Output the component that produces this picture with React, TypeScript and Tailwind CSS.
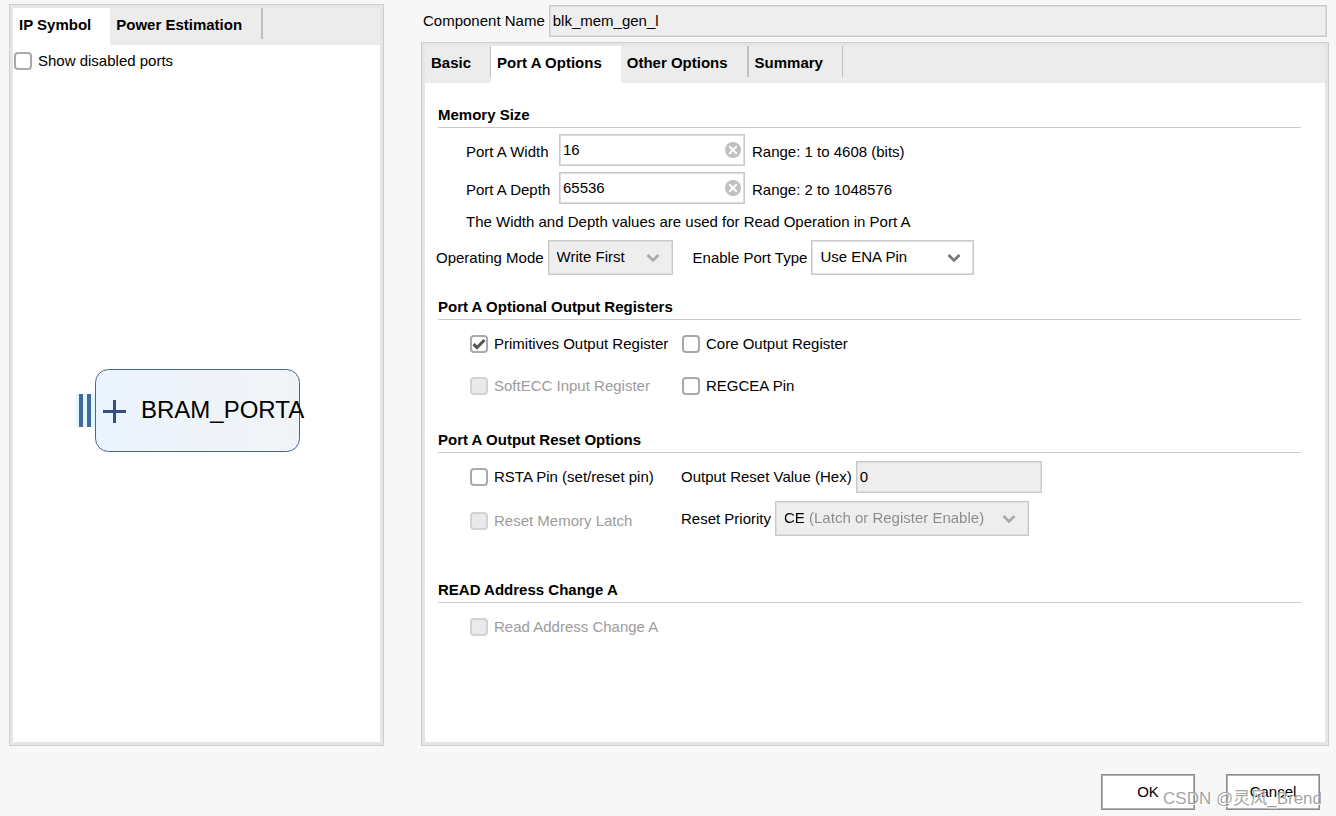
import React, { useState } from 'react';
import clsx from 'clsx';

interface Tab {
  name: string;
  divider?: string;
}

const symbolTabs: Tab[] = [
  { name: 'IP Symbol' },
  { name: 'Power Estimation', divider: 'w-0.5' }
];

const optionTabs: Tab[] = [
  { name: 'Basic', divider: 'w-px' },
  { name: 'Port A Options' },
  { name: 'Other Options', divider: 'w-0.5' },
  { name: 'Summary', divider: 'w-px' }
];

// Shared frame of text boxes and drop-downs
const fieldFrame = 'border border-[#c9c9c9] inset-ring inset-ring-[#dedede]';

interface TabBarProps {
  tabs: Tab[];
  active: string;
  onSelect: (name: string) => void;
}

function TabBar({ tabs, active, onSelect }: TabBarProps) {
  return (
    <div role="tablist" className="flex h-[37px] bg-[#ececec]">
      {tabs.map(tab => (
        <div key={tab.name} role="presentation" className="flex">
          <button
            role="tab"
            aria-selected={tab.name === active}
            onClick={() => onSelect(tab.name)}
            className={clsx(
              'pl-1.5 pr-[19px] pb-1 font-bold whitespace-nowrap',
              tab.name === active && 'bg-white'
            )}
          >
            {tab.name}
          </button>
          {tab.divider && <span className={clsx('h-[31px] bg-[#bfbfbf]', tab.divider)} />}
        </div>
      ))}
    </div>
  );
}

function Panel({ children, className }: { children: React.ReactNode; className?: string }) {
  return (
    <div className={clsx('flex flex-col border border-[#cdcdcd] bg-[#e6e6e6] p-[3px]', className)}>
      <div className="flex flex-1 flex-col bg-white">{children}</div>
    </div>
  );
}

interface CheckboxProps {
  label: string;
  defaultChecked?: boolean;
  disabled?: boolean;
}

function Checkbox({ label, defaultChecked, disabled }: CheckboxProps) {
  return (
    <label className={clsx('flex items-center gap-1.5 whitespace-nowrap', disabled && 'text-[#9c9c9c]')}>
      <span className="grid">
        <input
          type="checkbox"
          defaultChecked={defaultChecked}
          disabled={disabled}
          className="peer col-start-1 row-start-1 size-[18px] appearance-none rounded border-2 border-[#a9a9a9] bg-white disabled:border-[#d2d2d2] disabled:bg-[#e9eaec]"
        />
        <svg
          viewBox="0 0 18 18"
          className="pointer-events-none invisible col-start-1 row-start-1 size-[18px] peer-checked:visible"
        >
          <path d="M3.5 9.2 L7 12.6 L14.5 5" fill="none" stroke="#555" strokeWidth="3" />
        </svg>
      </span>
      {label}
    </label>
  );
}

function Section({ title, children }: { title: string; children: React.ReactNode }) {
  return (
    <section className="pt-[22px]">
      <h2 className="border-b border-[#cbcbcb] pb-0.5 font-bold">{title}</h2>
      {children}
    </section>
  );
}

interface NumberRowProps {
  id: string;
  label: string;
  initial: string;
  range: string;
}

function NumberRow({ id, label, initial, range }: NumberRowProps) {
  const [value, setValue] = useState(initial);

  return (
    <div className="flex items-center">
      <label htmlFor={id} className="w-[93px] pt-1">{label}</label>
      <div className={clsx('flex h-8 w-[186px] items-center bg-white px-[3px]', fieldFrame)}>
        <input
          id={id}
          value={value}
          onChange={e => setValue(e.target.value)}
          className="min-w-0 flex-1 outline-none"
        />
        <button aria-label={`Clear ${label}`} onClick={() => setValue('')}>
          <svg viewBox="0 0 16 16" className="size-4">
            <circle cx="8" cy="8" r="8" fill="#c0c0c0" />
            <path d="M4.3 4.3 L11.7 11.7 M11.7 4.3 L4.3 11.7" stroke="#fff" strokeWidth="2" />
          </svg>
        </button>
      </div>
      <span className="pl-[7px] pt-1">{range}</span>
    </div>
  );
}

interface SelectProps {
  id: string;
  label: string;
  options: string[];
  disabled?: boolean;
  className: string;
  textClass?: string;
}

function Select({ id, label, options, disabled, className, textClass = 'text-black' }: SelectProps) {
  return (
    <div className="flex items-center gap-1">
      <label htmlFor={id} className="whitespace-nowrap">{label}</label>
      <div className={clsx('grid h-[35px] items-center', fieldFrame, disabled ? 'bg-[#eee]' : 'bg-white', className)}>
        <select
          id={id}
          disabled={disabled}
          className={clsx('col-start-1 row-start-1 w-full appearance-none pb-0.5 pl-2 outline-none disabled:opacity-100', textClass)}
        >
          {options.map(option => (
            <option key={option}>{option}</option>
          ))}
        </select>
        <svg
          viewBox="0 0 14 10"
          className="pointer-events-none col-start-1 row-start-1 mr-3 h-2.5 w-3.5 justify-self-end"
        >
          <path d="M1.5 2 L7 7.4 L12.5 2" fill="none" stroke={disabled ? '#aaa' : '#777'} strokeWidth="2.8" />
        </svg>
      </div>
    </div>
  );
}

function PortSymbol() {
  return (
    <svg viewBox="0 0 243 84" className="h-[84px] w-[243px] overflow-visible">
      <defs>
        <linearGradient id="portFill">
          <stop offset="0" stopColor="#eaf4ff" />
          <stop offset="0.6" stopColor="#f0f4f9" />
          <stop offset="1" stopColor="#f1f4f7" />
        </linearGradient>
      </defs>
      <rect x="0" y="25" width="20" height="33" fill="#e2f4fc" />
      <rect x="3" y="25" width="4" height="33" fill="#3f6a98" />
      <rect x="11" y="25" width="4" height="33" fill="#3f6a98" />
      <rect x="19.5" y="0.5" width="204" height="82" rx="13" fill="url(#portFill)" stroke="#47658f" />
      <path d="M27 42.5 H50 M38.5 31 V54" stroke="#344f85" strokeWidth="3" />
      <text x="65" y="49" fontSize="24" fill="#000">BRAM_PORTA</text>
    </svg>
  );
}

export default function App() {
  const [symbolTab, setSymbolTab] = useState('IP Symbol');
  const [optionTab, setOptionTab] = useState('Port A Options');

  return (
    <div className="relative flex min-h-screen flex-col bg-[#f7f7f7] pt-1 font-['Liberation_Sans',Arial,sans-serif] text-[15px] leading-5 text-black">
      <main className="flex flex-1 gap-[37px] pl-[9px] pr-[7px]">
        <Panel className="w-[375px] shrink-0">
          <TabBar tabs={symbolTabs} active={symbolTab} onSelect={setSymbolTab} />
          <div className="py-1.5 pl-px">
            <Checkbox label="Show disabled ports" />
          </div>
          <div className="flex flex-1 items-center justify-center pl-0.5 pt-0.5">
            <PortSymbol />
          </div>
        </Panel>

        <div className="flex min-w-0 flex-1 flex-col gap-[5px] pt-px">
          <div className="flex items-center gap-1 pl-0.5 pr-0.5">
            <label htmlFor="componentName" className="whitespace-nowrap">Component Name</label>
            <input
              id="componentName"
              readOnly
              value="blk_mem_gen_l"
              className={clsx('h-8 min-w-0 flex-1 bg-[#eee] px-[3px] pb-0.5 outline-none', fieldFrame)}
            />
          </div>

          <Panel className="flex-1">
            <TabBar tabs={optionTabs} active={optionTab} onSelect={setOptionTab} />
            <div className="pl-[13px] pr-6">
              <Section title="Memory Size">
                <div className="flex flex-col gap-1.5 pl-7 pt-1.5">
                  <NumberRow id="widthA" label="Port A Width" initial="16" range="Range: 1 to 4608 (bits)" />
                  <NumberRow id="depthA" label="Port A Depth" initial="65536" range="Range: 2 to 1048576" />
                </div>
                <p className="py-2 pl-7">The Width and Depth values are used for Read Operation in Port A</p>
                <div className="-ml-0.5 flex gap-5">
                  <Select id="mode" label="Operating Mode" options={['Write First', 'Read First', 'No Change']} disabled className="w-[125px]" />
                  <Select id="enable" label="Enable Port Type" options={['Use ENA Pin', 'Always Enabled']} className="w-[163px]" />
                </div>
              </Section>

              <Section title="Port A Optional Output Registers">
                <div className="grid grid-cols-[212px_1fr] gap-y-[22px] pb-3 pl-8 pt-3.5">
                  <Checkbox label="Primitives Output Register" defaultChecked />
                  <Checkbox label="Core Output Register" />
                  <Checkbox label="SoftECC Input Register" disabled />
                  <Checkbox label="REGCEA Pin" />
                </div>
              </Section>

              <Section title="Port A Output Reset Options">
                <div className="flex pb-[22px] pl-8">
                  <div className="flex w-[211px] flex-col gap-6 pt-3.5">
                    <Checkbox label="RSTA Pin (set/reset pin)" />
                    <Checkbox label="Reset Memory Latch" disabled />
                  </div>
                  <div className="flex flex-col gap-2 pt-2">
                    <div className="flex items-center gap-1">
                      <label htmlFor="resetValue" className="whitespace-nowrap">Output Reset Value (Hex)</label>
                      <input
                        id="resetValue"
                        readOnly
                        value="0"
                        className={clsx('h-8 w-[186px] bg-[#eee] px-[3px] pb-0.5 outline-none', fieldFrame)}
                      />
                    </div>
                    <Select
                      id="priority"
                      label="Reset Priority"
                      options={['CE (Latch or Register Enable)', 'SR (Set or Reset)']}
                      disabled
                      className="w-[254px]"
                      textClass="bg-[linear-gradient(to_right,#000_31px,#8a8a8a_31px)] bg-clip-text text-transparent"
                    />
                  </div>
                </div>
              </Section>

              <Section title="READ Address Change A">
                <div className="pb-3 pl-8 pt-3.5">
                  <Checkbox label="Read Address Change A" disabled />
                </div>
              </Section>
            </div>
          </Panel>
        </div>
      </main>

      <footer className="flex justify-end gap-[31px] pb-1.5 pr-4 pt-7">
        <button className="h-9 w-[94px] border border-[#8c8c8c] bg-white inset-ring inset-ring-[#b4b4b4]">OK</button>
        <button className="h-9 w-[94px] border border-[#8c8c8c] bg-white inset-ring inset-ring-[#b4b4b4]">Cancel</button>
      </footer>

      <span className="pointer-events-none absolute bottom-[7px] right-3.5 font-['Liberation_Sans','Noto_Sans_CJK_SC',sans-serif] text-[17px] text-[#999]/90 [text-shadow:1px_1px_0_#fff]">
        CSDN @灵风_Brend
      </span>
    </div>
  );
}
